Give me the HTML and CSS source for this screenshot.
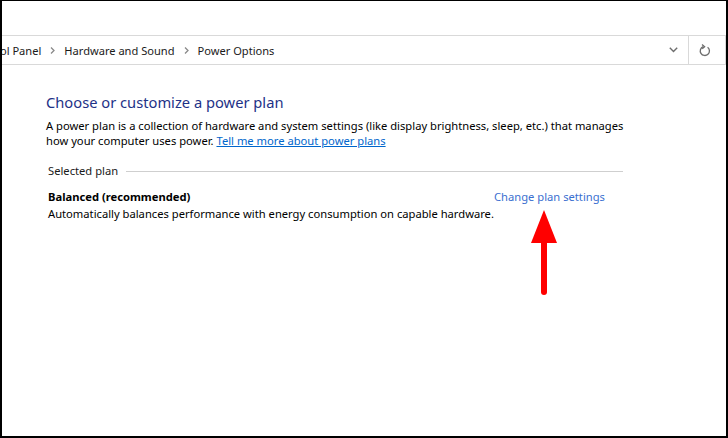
FILE: index.html
```html
<!DOCTYPE html>
<html>
<head>
<meta charset="utf-8">
<link rel="stylesheet" href="styles.css">
</head>
<body>
<div class="window">
  <div class="addressbar">
    <div class="crumbs">
      <span class="crumb first">Control Panel</span>
      <svg class="sep" width="5" height="7" viewBox="0 0 5 7"><path d="M1 0.5 L4 3.5 L1 6.5" fill="none" stroke="#8a8a8a" stroke-width="1.3"/></svg>
      <span class="crumb">Hardware and Sound</span>
      <svg class="sep" width="5" height="7" viewBox="0 0 5 7"><path d="M1 0.5 L4 3.5 L1 6.5" fill="none" stroke="#8a8a8a" stroke-width="1.3"/></svg>
      <span class="crumb">Power Options</span>
    </div>
    <div class="dropdown">
      <svg width="9" height="6" viewBox="0 0 9 6"><path d="M0.8 0.8 L4.5 4.5 L8.2 0.8" fill="none" stroke="#6d6d6d" stroke-width="1.4"/></svg>
    </div>
    <div class="refresh">
      <svg width="12" height="13" viewBox="0 0 12 13"><path d="M4.2 2.6 A4.6 4.6 0 1 0 8.6 3.2" fill="none" stroke="#6d6d6d" stroke-width="1.3"/><path d="M3 0.6 L5.6 2.7 L3.2 4.8" fill="none" stroke="#6d6d6d" stroke-width="1.3"/></svg>
    </div>
  </div>

  <div class="content">
    <h1 class="title">Choose or customize a power plan</h1>
    <p class="desc">A power plan is a collection of hardware and system settings (like display brightness, sleep, etc.) that manages how your computer uses power. <a class="link" href="#">Tell me more about power plans</a></p>

    <div class="group">
      <span class="group-label">Selected plan</span>
      <span class="group-line"></span>
    </div>

    <div class="plan">
      <div class="plan-info">
        <div class="plan-name">Balanced (recommended)</div>
        <div class="plan-desc">Automatically balances performance with energy consumption on capable hardware.</div>
      </div>
      <a class="plan-link" href="#">Change plan settings</a>
    </div>
  </div>

  <svg class="arrow" width="30" height="90" viewBox="0 0 30 90">
    <polygon points="15,0 28,33 2,33" fill="#ff0000"/>
    <line x1="15" y1="30" x2="15" y2="82" stroke="#ff0000" stroke-width="6" stroke-linecap="round"/>
  </svg>
</div>
</body>
</html>
```

FILE: styles.css
```css
* { box-sizing: border-box; }
html, body { margin: 0; padding: 0; background: #fff; }
body {
  font-family: "Noto Sans", "Open Sans", sans-serif;
  font-size: 11.2px;
  color: #000;
}
.window {
  position: relative;
  width: 728px;
  height: 438px;
  background: #fff;
  border-top: 1px solid #000;
  border-left: 2px solid #000;
  border-right: 2px solid #000;
  border-bottom: 2px solid #000;
  overflow: hidden;
}
.addressbar {
  margin-top: 34px;
  height: 30px;
  display: flex;
  align-items: stretch;
  border: 1px solid #d9d9d9;
  border-left: none;
}
.crumbs {
  flex: 1;
  display: flex;
  align-items: center;
  gap: 8px;
  overflow: hidden;
  white-space: nowrap;
  color: #1a1a1a;
  font-size: 11.1px;
}
.crumb.first { margin-left: -31px; }
.sep { flex: none; margin: 0 1px; }
.dropdown {
  width: 40px;
  display: flex;
  align-items: center;
  justify-content: center;
  padding-left: 10px;
}
.refresh {
  width: 37px;
  display: flex;
  align-items: center;
  justify-content: center;
  border-left: 1px solid #d9d9d9;
  padding-right: 4px;
}
.content {
  padding-left: 44px;
}
.title {
  margin: 27px 0 0;
  font-weight: normal;
  font-size: 14.7px;
  line-height: 20px;
  color: #1e3287;
}
.desc {
  margin: 6px 0 0;
  width: 595px;
  line-height: 15px;
}
.link { color: #0066cc; text-decoration: underline; }
.group {
  margin-top: 15px;
  width: 577px;
  display: flex;
  align-items: center;
  gap: 8px;
  padding-left: 2px;
}
.group-label { line-height: 16px; color: #1a1a1a; }
.group-line { flex: 1; height: 1px; background: #cfcfcf; }
.plan {
  margin-top: 9px;
  padding-left: 2px;
  display: flex;
  align-items: flex-start;
}
.plan-info { width: 446px; flex: none; white-space: nowrap; }
.plan-name { font-weight: bold; line-height: 17px; }
.plan-desc { line-height: 17px; }
.plan-link {
  color: #3a6fd0;
  text-decoration: none;
  line-height: 17px;
  white-space: nowrap;
}
.arrow {
  position: absolute;
  left: 527px;
  top: 209px;
}
```
